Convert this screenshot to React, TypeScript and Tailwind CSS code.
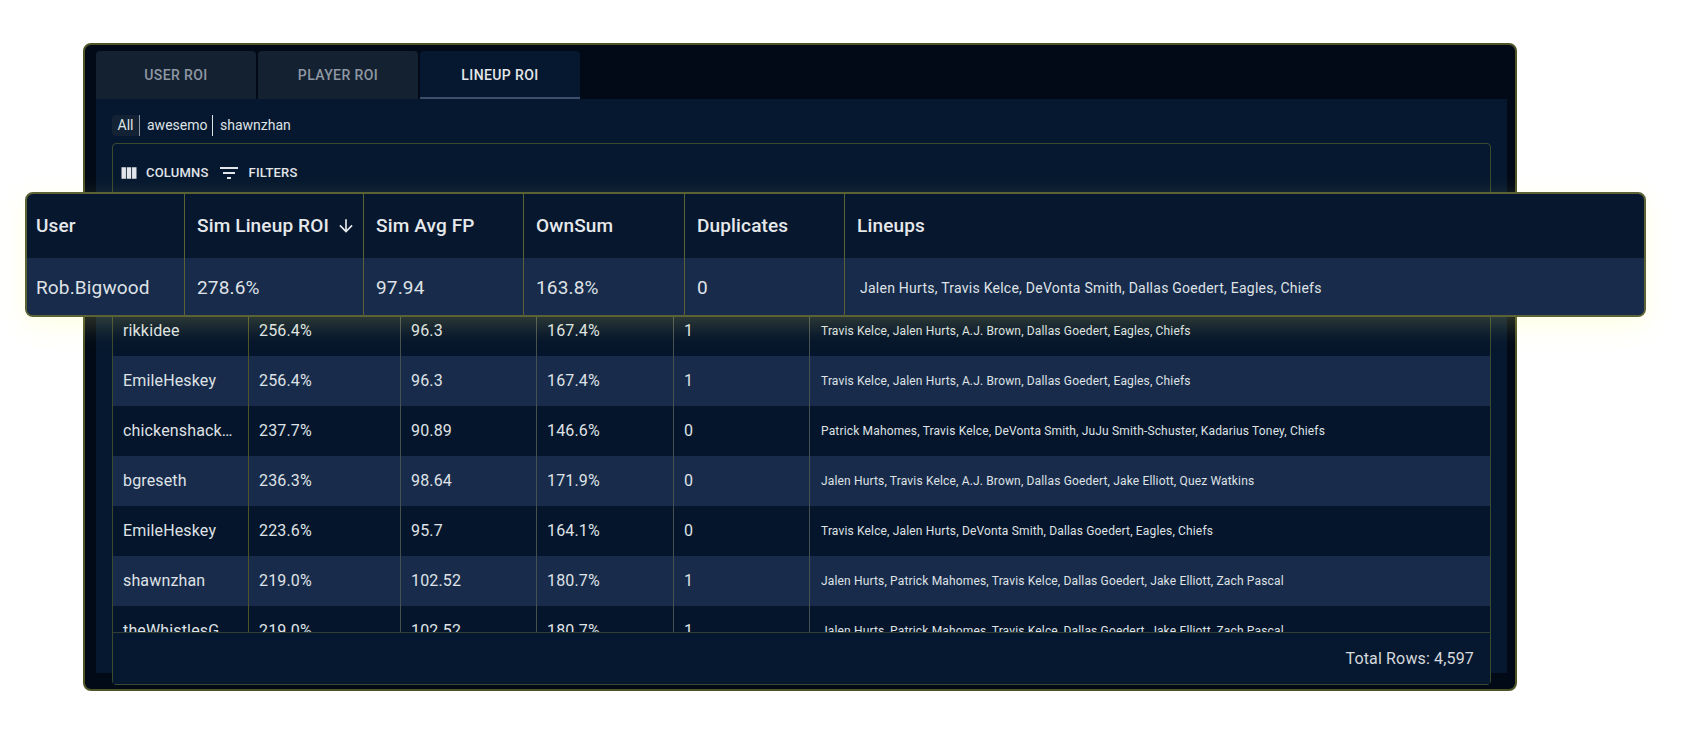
const rows = [
  { user: 'Rob.Bigwood', roi: '278.6%', fp: '97.94', own: '163.8%', dup: '0', lineup: 'Jalen Hurts, Travis Kelce, DeVonta Smith, Dallas Goedert, Eagles, Chiefs' },
  { user: 'rikkidee', roi: '256.4%', fp: '96.3', own: '167.4%', dup: '1', lineup: 'Travis Kelce, Jalen Hurts, A.J. Brown, Dallas Goedert, Eagles, Chiefs' },
  { user: 'EmileHeskey', roi: '256.4%', fp: '96.3', own: '167.4%', dup: '1', lineup: 'Travis Kelce, Jalen Hurts, A.J. Brown, Dallas Goedert, Eagles, Chiefs' },
  { user: 'chickenshack…', roi: '237.7%', fp: '90.89', own: '146.6%', dup: '0', lineup: 'Patrick Mahomes, Travis Kelce, DeVonta Smith, JuJu Smith-Schuster, Kadarius Toney, Chiefs' },
  { user: 'bgreseth', roi: '236.3%', fp: '98.64', own: '171.9%', dup: '0', lineup: 'Jalen Hurts, Travis Kelce, A.J. Brown, Dallas Goedert, Jake Elliott, Quez Watkins' },
  { user: 'EmileHeskey', roi: '223.6%', fp: '95.7', own: '164.1%', dup: '0', lineup: 'Travis Kelce, Jalen Hurts, DeVonta Smith, Dallas Goedert, Eagles, Chiefs' },
  { user: 'shawnzhan', roi: '219.0%', fp: '102.52', own: '180.7%', dup: '1', lineup: 'Jalen Hurts, Patrick Mahomes, Travis Kelce, Dallas Goedert, Jake Elliott, Zach Pascal' },
  { user: 'theWhistlesG', roi: '219.0%', fp: '102.52', own: '180.7%', dup: '1', lineup: 'Jalen Hurts, Patrick Mahomes, Travis Kelce, Dallas Goedert, Jake Elliott, Zach Pascal' },
];

const tabs = ['USER ROI', 'PLAYER ROI', 'LINEUP ROI'];
const tableCols = 'grid grid-cols-[135px_152px_136px_137px_136px_1fr]';
const overlayCols = 'grid grid-cols-[157px_179px_160px_161px_160px_1fr]';

function ArrowDown() {
  return (
    <svg className="w-[20px] h-[20px] ml-[7px] fill-current" viewBox="0 0 24 24">
      <path d="M20 12l-1.41-1.41L13 16.17V4h-2v12.17l-5.58-5.59L4 12l8 8 8-8z" />
    </svg>
  );
}

function Tabs() {
  return (
    <div className="flex gap-[2px] h-[48px]">
      {tabs.map((tab, index) => (
        <div
          key={tab}
          className={`w-[160px] rounded-t-[4px] flex items-center justify-center text-[14px] font-medium tracking-[0.4px] ${
            index === 2
              ? 'bg-[#06182f] text-[#e4e7eb] border-b-2 border-t-2 border-t-[#06182f] border-[#3e4f6e]'
              : 'bg-[#142131] text-[#8f98a3]'
          }`}
        >
          {tab}
        </div>
      ))}
    </div>
  );
}

function UserFilter() {
  return (
    <div className="flex items-center h-[21px] text-[14px] text-[#dfe2e6]">
      <span className="bg-[#132234] rounded-l-[4px] w-[27px] h-full flex items-center justify-center">All</span>
      <span className="w-[1px] h-full bg-[#8f98a3]" />
      <span className="px-[7px] w-[72px]">awesemo</span>
      <span className="w-[1px] h-full bg-[#dfe2e6]" />
      <span className="pl-[7px]">shawnzhan</span>
    </div>
  );
}

function Toolbar() {
  return (
    <div className="h-[48px] flex items-center pl-[7px] pt-[10px] text-[13px] font-medium text-[#e2e5e9] tracking-[0.2px]">
      <svg className="w-[20px] h-[20px] fill-current -ml-[1px]" viewBox="0 0 24 24">
        <path d="M14.67 5v14H9.33V5h5.34zm1 14H21V5h-5.33v14zm-7.34 0V5H3v14h5.33z" />
      </svg>
      <span className="ml-[7px]">COLUMNS</span>
      <svg className="w-[24px] h-[24px] fill-current ml-[8px]" viewBox="0 0 24 24">
        <path d="M10 18h4v-2h-4v2zM3 6v2h18V6H3zm3 7h12v-2H6v2z" />
      </svg>
      <span className="ml-[8px]">FILTERS</span>
    </div>
  );
}

function DataTable() {
  return (
    <div className="mt-[7px] h-[542px] rounded-[4px] border border-[#3b4a2e] bg-[#06182f]">
      <Toolbar />
      <div className="h-[440px] overflow-hidden">
        {/* header and first row sit under the highlighted strip */}
        <div className="h-[114px]" />
        {rows.slice(1).map((row, index) => (
          <div
            key={index}
            className={`${tableCols} h-[50px] text-[16px] tracking-[0.15px] text-[#dfe2e6] ${
              index % 2 === 1 ? 'bg-[#182b4b]' : 'bg-[#05152b]'
            }`}
          >
            <div className="flex items-center pl-[10px] pb-[1px]">{row.user}</div>
            <div className="flex items-center pl-[10px] pb-[1px] border-l border-[#4f5427]">{row.roi}</div>
            <div className="flex items-center pl-[10px] pb-[1px] border-l border-[#46514f]">{row.fp}</div>
            <div className="flex items-center pl-[10px] pb-[1px] border-l border-[#46514f]">{row.own}</div>
            <div className="flex items-center pl-[10px] pb-[1px] border-l border-[#46514f]">{row.dup}</div>
            <div className="flex items-center pl-[11px] pb-[1px] border-l border-[#46514f] text-[12px] tracking-[0.16px]">{row.lineup}</div>
          </div>
        ))}
      </div>
      <div className="h-[52px] border-t border-[#2f3d33] flex items-center justify-end pr-[16px] text-[16px] tracking-[0.15px] text-[#d5d8dc] bg-[#06182f]">
        Total Rows: 4,597
      </div>
    </div>
  );
}

function HighlightRow() {
  const row = rows[0];
  return (
    <div className="absolute left-[25px] top-[192px] w-[1621px] h-[125px] rounded-[8px] border-2 border-[#5b6233] bg-[#06172e] overflow-hidden text-[#e6e9ec] shadow-[0_8px_24px_rgba(255,255,120,0.2)]">
      <div className={`${overlayCols} h-[64px] text-[19px] font-medium tracking-[0.15px]`}>
        <div className="flex items-center pl-[9px]">User</div>
        <div className="flex items-center pl-[12px] border-l border-[#5b6233]">
          Sim Lineup ROI
          <ArrowDown />
        </div>
        <div className="flex items-center pl-[12px] border-l border-[#5b6233]">Sim Avg FP</div>
        <div className="flex items-center pl-[12px] border-l border-[#5b6233]">OwnSum</div>
        <div className="flex items-center pl-[12px] border-l border-[#5b6233]">Duplicates</div>
        <div className="flex items-center pl-[12px] border-l border-[#5b6233]">Lineups</div>
      </div>
      <div className={`${overlayCols} h-[57px] bg-[#182b4b] text-[19px] tracking-[0.15px] text-[#dfe2e6]`}>
        <div className="flex items-center pl-[9px] pt-[3px]">{row.user}</div>
        <div className="flex items-center pl-[12px] pt-[3px] border-l border-[#5b6233]">{row.roi}</div>
        <div className="flex items-center pl-[12px] pt-[3px] border-l border-[#5b6233]">{row.fp}</div>
        <div className="flex items-center pl-[12px] pt-[3px] border-l border-[#5b6233]">{row.own}</div>
        <div className="flex items-center pl-[12px] pt-[3px] border-l border-[#5b6233]">{row.dup}</div>
        <div className="flex items-center pl-[15px] pt-[3px] border-l border-[#5b6233] text-[14px] tracking-[0.25px]">{row.lineup}</div>
      </div>
    </div>
  );
}

export default function App() {
  return (
    <div className="relative h-[737px] bg-white pt-[43px] pl-[83px] overflow-hidden font-['Roboto',sans-serif]">
      <div className="w-[1434px] h-[648px] rounded-[8px] border-2 border-[#4f5427] bg-[#020a17] pt-[6px] pl-[11px]">
        <Tabs />
        <div className="w-[1411px] h-[574px] bg-[#06182f] pt-[16px] pl-[16px]">
          <UserFilter />
          <div className="w-[1379px]">
            <DataTable />
          </div>
        </div>
      </div>
      <HighlightRow />
    </div>
  );
}
